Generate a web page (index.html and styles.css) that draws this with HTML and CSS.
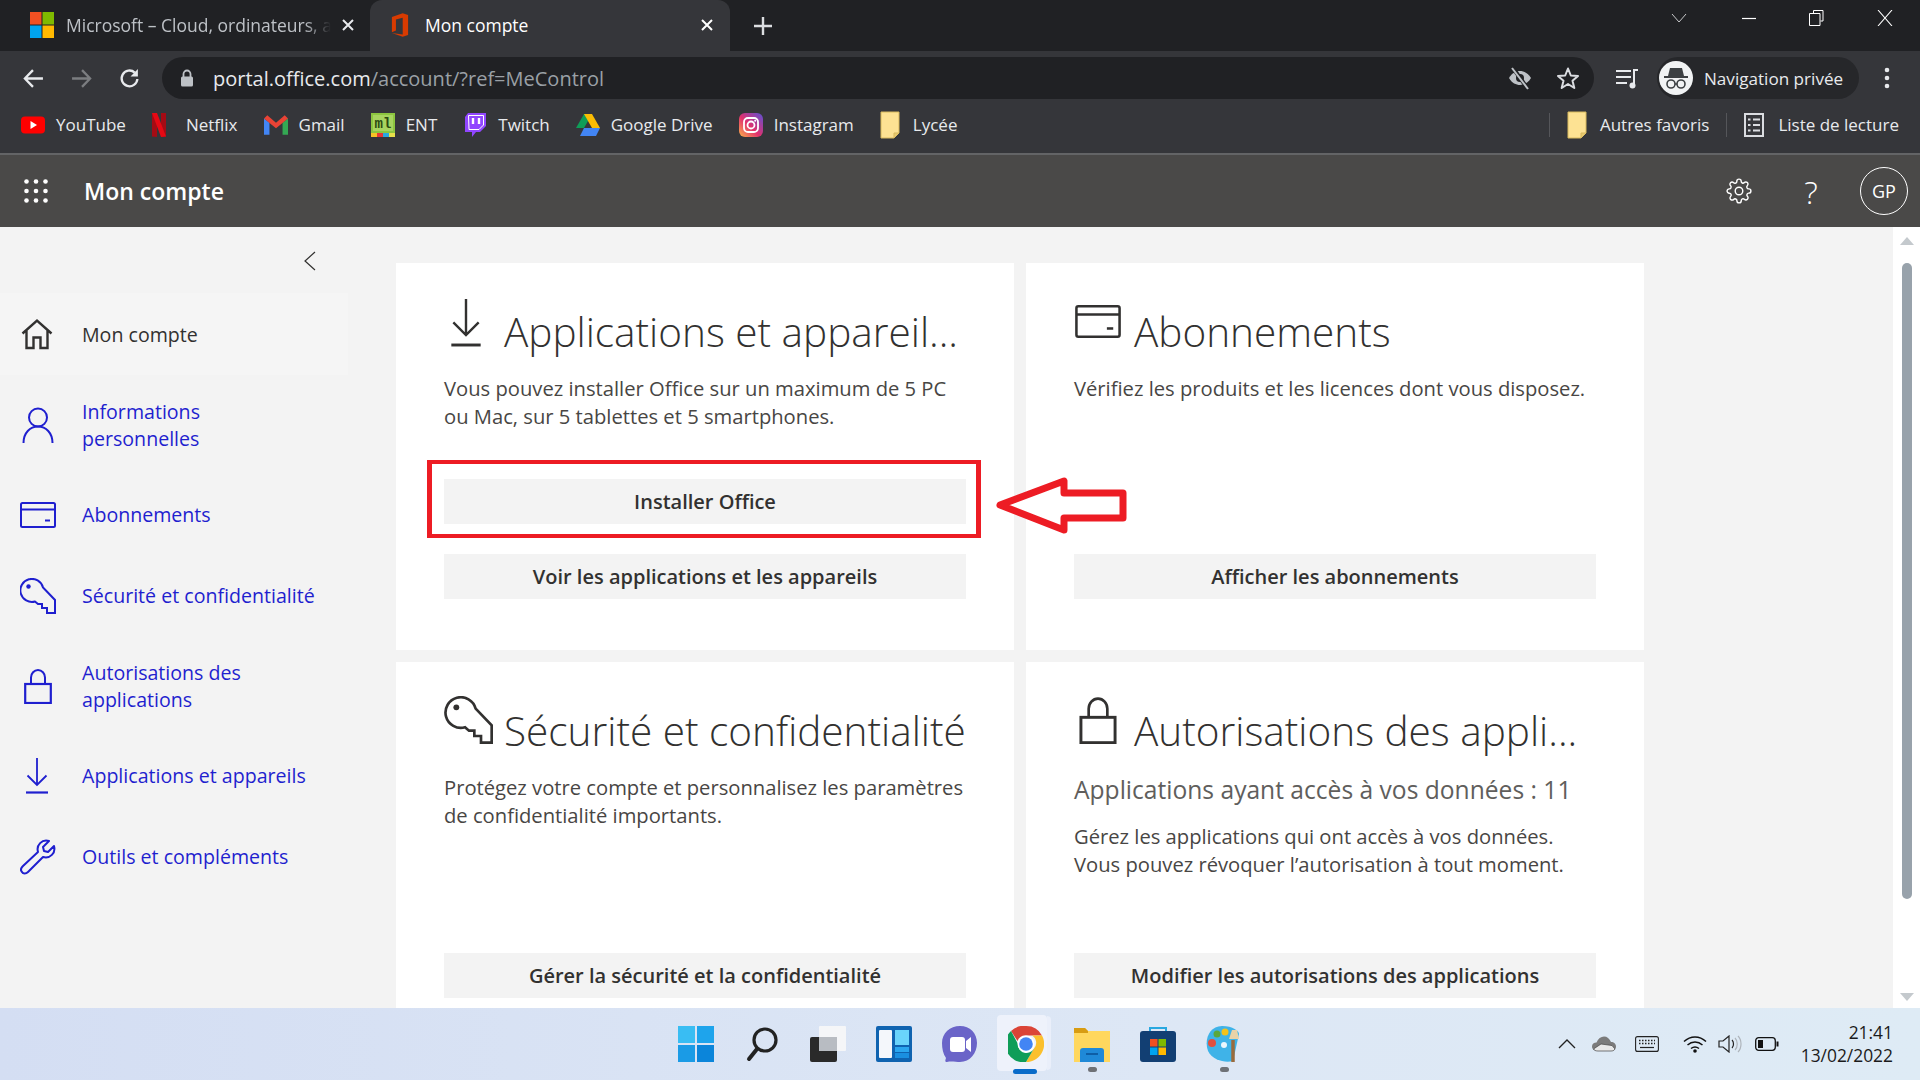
FILE: index.html
```html
<!DOCTYPE html>
<html lang="fr">
	<head>
		<meta charset="utf-8">
		<title>Mon compte</title>
		<link rel="stylesheet" href="styles.css">
	</head>
	<body>
		<svg class="defs" width="0" height="0">
			<symbol id="i-home" viewBox="0 0 32 32"><path d="M1.5 15.5 16 2.5l14.500 13M5.500 12.500V30H12.500V19.500H19.500V30H26.500V12.500" fill="none" stroke="currentColor" stroke-width="2.400"/></symbol>
			<symbol id="i-user" viewBox="0 0 32 36"><circle cx="16" cy="10.500" r="9" fill="none" stroke="currentColor" stroke-width="2"/><path d="M1.500 36C1.500 26 8 19.500 16 19.500S30.500 26 30.500 36" fill="none" stroke="currentColor" stroke-width="2"/></symbol>
			<symbol id="i-card" viewBox="0 0 36 26"><rect x="1" y="1" width="34" height="24" rx="1.500" fill="none" stroke="currentColor" stroke-width="2"/><path d="M1 7.500H35" stroke="currentColor" stroke-width="2"/><path d="M25 18.500H30" stroke="currentColor" stroke-width="2"/></symbol>
			<symbol id="i-key" viewBox="0 0 36 36"><path d="M15 23.500A11.500 11.500 0 1 1 23 9.500L35 22V35H27V30H22V26H18Z" fill="none" stroke="currentColor" stroke-width="2"/><circle cx="8.500" cy="8.500" r="2.200" fill="currentColor"/></symbol>
			<symbol id="i-lock" viewBox="0 0 28 36"><path d="M7 16V9.500a7 7.500 0 0 1 14 0V16" fill="none" stroke="currentColor" stroke-width="2"/><rect x="1.200" y="16" width="25.600" height="19" fill="none" stroke="currentColor" stroke-width="2.200"/></symbol>
			<symbol id="i-down" viewBox="0 0 22 36"><path d="M11 0V27M1.500 17.500 11 27l9.500-9.500" fill="none" stroke="currentColor" stroke-width="1.800"/><path d="M0 34.500H22" stroke="currentColor" stroke-width="2.200"/></symbol>
			<symbol id="i-tool" viewBox="0 0 36 36"><path d="M29 2 23 8 24 12 28 13 34 7C36 14 30 20 23 18L8 33C6 35 3 35 2 33 0 31 1 29 3 27L18 13C16 6 22 0 29 2Z" fill="none" stroke="currentColor" stroke-width="2" stroke-linejoin="round"/></symbol>
			<symbol id="i-x" viewBox="0 0 14 14"><path d="M2 2 12 12M12 2 2 12" fill="none" stroke="currentColor" stroke-width="2"/></symbol>
			<symbol id="i-folder" viewBox="0 0 20 28"><path d="M1 1H19V22L14 27H1Z" fill="#fde293" stroke="#d8b95c"/><path d="M14 27V22H19" fill="#e8c96e" stroke="#d8b95c"/></symbol>
		</svg>

		<div class="tabstrip">
			<div class="tab">
				<svg class="favicon" viewBox="0 0 24 26"><rect width="11.500" height="12.500" fill="#f25022"/><rect x="12.500" width="11.500" height="12.500" fill="#7fba00"/><rect y="13.500" width="11.500" height="12.500" fill="#00a4ef"/><rect x="12.500" y="13.500" width="11.500" height="12.500" fill="#ffb900"/></svg>
				<span class="tab-title tab-fade">Microsoft – Cloud, ordinateurs, applications</span>
				<svg class="tab-close"><use href="#i-x"/></svg>
			</div>
			<div class="tab tab-active">
				<svg class="favicon-office" viewBox="0 0 20 26"><path d="M1 4 13 0 19 2V24L13 26 1 22 13 23.500V5L5.500 7V19L1 21Z" fill="#d83b01"/></svg>
				<span class="tab-title">Mon compte</span>
				<svg class="tab-close"><use href="#i-x"/></svg>
			</div>
			<svg class="tab-new" viewBox="0 0 20 20"><path d="M10 1V19M1 10H19" stroke="#dcdee1" stroke-width="2.400"/></svg>
			<div class="win-controls">
				<svg viewBox="0 0 16 10" class="win-chevron"><path d="M1 1 8 9l7-8" fill="none" stroke="#c8c9cb" stroke-width="1"/></svg>
				<svg viewBox="0 0 16 16" class="win-btn"><path d="M1 8.500H15" stroke="#fff" stroke-width="1.200"/></svg>
				<svg viewBox="0 0 16 16" class="win-btn"><path d="M4.500 3V.5H14V11H11.500M.5 3.500H11V15.500H.5Z" fill="none" stroke="#fff" stroke-width="1"/></svg>
				<svg viewBox="0 0 16 16" class="win-btn"><path d="M1 0 15 16M15 0 1 16" stroke="#fff" stroke-width="1.100"/></svg>
			</div>
		</div>

		<div class="toolbar">
			<div class="nav-btn"><svg viewBox="0 0 20 20"><path d="M19 10H2M9.500 2 1.800 10l7.700 8" fill="none" stroke="#e8eaed" stroke-width="2.200"/></svg></div>
			<div class="nav-btn"><svg viewBox="0 0 20 20"><path d="M1 10H18M10.500 2 18.200 10l-7.700 8" fill="none" stroke="#7b7d80" stroke-width="2.200"/></svg></div>
			<div class="nav-btn"><svg viewBox="0 0 20 20"><path d="M17.500 10.500A7.500 7.500 0 1 1 15 4.300" fill="none" stroke="#e8eaed" stroke-width="2.200"/><path d="M18 1V8H11Z" fill="#e8eaed"/></svg></div>
			<div class="address">
				<svg class="lock" viewBox="0 0 14 18"><path d="M3.500 8V5a3.500 3.500 0 0 1 7 0V8" fill="none" stroke="#bdc1c6" stroke-width="1.800"/><rect x="1" y="7.500" width="12" height="10" rx="1.500" fill="#bdc1c6"/></svg>
				<span class="url"><span class="url-host">portal.office.com</span>/account/?ref=MeControl</span>
				<svg class="addr-icon" viewBox="0 0 24 24"><path d="M1 12C4 7 8 5 12 5s8 2 11 7c-3 5-7 7-11 7S4 17 1 12Z" fill="#bdc1c6"/><circle cx="12" cy="12" r="4" fill="#202124"/><path d="M5 2 20 23" stroke="#202124" stroke-width="4"/><path d="M4 2 20 23" stroke="#bdc1c6" stroke-width="2"/></svg>
				<svg class="addr-icon addr-star" viewBox="0 0 24 24"><path d="M12 2.500 14.800 9.500 22 10 16.500 14.800 18.300 22 12 18 5.700 22 7.500 14.800 2 10 9.200 9.500Z" fill="none" stroke="#dadce0" stroke-width="2" stroke-linejoin="round"/></svg>
			</div>
			<svg class="media" viewBox="0 0 24 24"><path d="M1 5H16M1 11H16M1 17H12" stroke="#e8eaed" stroke-width="2.200"/><path d="M19 19V4H23" fill="none" stroke="#e8eaed" stroke-width="2"/><circle cx="17.500" cy="19.500" r="3" fill="#e8eaed"/></svg>
			<div class="incognito">
				<span class="incognito-face"><svg viewBox="0 0 26 26"><path d="M7 3H19L21 11H25V13H1V11H5Z" fill="#3c4043"/><circle cx="8" cy="19" r="4" fill="none" stroke="#3c4043" stroke-width="1.600"/><circle cx="18" cy="19" r="4" fill="none" stroke="#3c4043" stroke-width="1.600"/><path d="M12 19H14" stroke="#3c4043" stroke-width="1.600"/></svg></span>
				<span>Navigation privée</span>
			</div>
			<svg class="kebab" viewBox="0 0 6 24"><circle cx="3" cy="4" r="2.300" fill="#e8eaed"/><circle cx="3" cy="12" r="2.300" fill="#e8eaed"/><circle cx="3" cy="20" r="2.300" fill="#e8eaed"/></svg>
		</div>

		<div class="bookmarks">
			<div class="bm bm-yt">
				<svg class="bm-icon" viewBox="0 0 24 18"><rect width="24" height="17" y=".5" rx="4" fill="#f00"/><path d="M9.500 5 16 9l-6.500 4Z" fill="#fff"/></svg>
				<span>YouTube</span>
			</div>
			<div class="bm bm-nf">
				<svg class="bm-icon nf" viewBox="0 0 14 24"><path d="M0 0H5V24L0 23.500ZM9 0H14V23.500L9 24Z" fill="#a50b14"/><path d="M0 0H5L14 23.500 9 24Z" fill="#e50914"/></svg>
				<span>Netflix</span>
			</div>
			<div class="bm bm-gm">
				<svg class="bm-icon" viewBox="0 0 22 18"><path d="M0 3V18H5V7Z" fill="#4285f4"/><path d="M22 3V18H17V7Z" fill="#34a853"/><path d="M0 3 3 0 11 7 19 0 22 3 11 12Z" fill="#ea4335"/></svg>
				<span>Gmail</span>
			</div>
			<div class="bm bm-ent">
				<svg class="bm-icon" viewBox="0 0 24 24"><rect width="24" height="24" fill="#8cc63f"/><rect y="20" width="6" height="4" fill="#f7c325"/><rect x="6" y="20" width="6" height="4" fill="#e53935"/><rect x="12" y="20" width="6" height="4" fill="#29a8e0"/><rect x="18" y="20" width="6" height="4" fill="#e6e04a"/><rect x="2" y="2" width="20" height="16" fill="#a7d45f"/><text class="ent-text" x="12" y="15" text-anchor="middle">ml</text></svg>
				<span>ENT</span>
			</div>
			<div class="bm bm-tw">
				<svg class="bm-icon" viewBox="0 0 22 24"><path d="M4 0H22V13L16 19H12L8 24V19H1V4Z" fill="#9146ff"/><path d="M9 5V11M15 5V11" stroke="#fff" stroke-width="2.400"/><path d="M4.500 2.500H19.500V12L15 16.500H5Z" fill="none" stroke="#fff" stroke-width="1"/></svg>
				<span>Twitch</span>
			</div>
			<div class="bm bm-gd">
				<svg class="bm-icon" viewBox="0 0 24 22"><path d="M8 0H16L8 14H0Z" fill="#0f9d58"/><path d="M8 0H16L24 14H16Z" fill="#fbbc04"/><path d="M8 14H24L20 22H4Z" fill="#4285f4"/></svg>
				<span>Google Drive</span>
			</div>
			<div class="bm bm-ig">
				<svg class="bm-icon" viewBox="0 0 24 24"><defs><linearGradient id="ig" x1="0" y1="1" x2="1" y2="0"><stop offset="0" stop-color="#fdb44a"/><stop offset=".45" stop-color="#e1306c"/><stop offset="1" stop-color="#5b51d8"/></linearGradient></defs><rect width="24" height="24" rx="6" fill="url(#ig)"/><rect x="5" y="5" width="14" height="14" rx="4" fill="none" stroke="#fff" stroke-width="1.800"/><circle cx="12" cy="12" r="3.500" fill="none" stroke="#fff" stroke-width="1.800"/><circle cx="16.200" cy="7.800" r="1" fill="#fff"/></svg>
				<span>Instagram</span>
			</div>
			<div class="bm">
				<svg class="bm-icon folder"><use href="#i-folder"/></svg>
				<span>Lycée</span>
			</div>
			<div class="bm-right">
				<div class="bm bm-sep">
					<svg class="bm-icon folder"><use href="#i-folder"/></svg>
					<span>Autres favoris</span>
				</div>
				<div class="bm bm-sep">
					<svg class="bm-icon list" viewBox="0 0 20 24"><rect x="1" y="1" width="18" height="22" fill="none" stroke="#dadce0" stroke-width="2"/><path d="M4 6.500H6.500M9 6.500H16M4 12H6.500M9 12H16M4 17.500H6.500M9 17.500H16" stroke="#dadce0" stroke-width="2"/></svg>
					<span>Liste de lecture</span>
				</div>
			</div>
		</div>

		<div class="suite-header">
			<svg class="waffle" viewBox="0 0 24 24"><g fill="#fff"><circle cx="2.500" cy="2.500" r="2.300"/><circle cx="12" cy="2.500" r="2.300"/><circle cx="21.500" cy="2.500" r="2.300"/><circle cx="2.500" cy="12" r="2.300"/><circle cx="12" cy="12" r="2.300"/><circle cx="21.500" cy="12" r="2.300"/><circle cx="2.500" cy="21.500" r="2.300"/><circle cx="12" cy="21.500" r="2.300"/><circle cx="21.500" cy="21.500" r="2.300"/></g></svg>
			<span class="suite-title">Mon compte</span>
			<svg class="gear" viewBox="0 0 24 24"><circle cx="12" cy="12" r="3.500" fill="none" stroke="#fff" stroke-width="1.300"/><path d="M19.400 15a1.650 1.650 0 0 0 .33 1.820l.06.06a2 2 0 0 1 0 2.830 2 2 0 0 1-2.830 0l-.06-.06a1.650 1.650 0 0 0-1.820-.33 1.650 1.650 0 0 0-1 1.510V21a2 2 0 0 1-2 2 2 2 0 0 1-2-2v-.09A1.650 1.650 0 0 0 9 19.400a1.650 1.650 0 0 0-1.820.33l-.06.06a2 2 0 0 1-2.830 0 2 2 0 0 1 0-2.830l.06-.06a1.650 1.650 0 0 0 .33-1.820 1.650 1.650 0 0 0-1.510-1H3a2 2 0 0 1-2-2 2 2 0 0 1 2-2h.09A1.650 1.650 0 0 0 4.600 9a1.650 1.650 0 0 0-.33-1.820l-.06-.06a2 2 0 0 1 0-2.830 2 2 0 0 1 2.830 0l.06.06a1.650 1.650 0 0 0 1.820.33H9a1.650 1.650 0 0 0 1-1.510V3a2 2 0 0 1 2-2 2 2 0 0 1 2 2v.09a1.650 1.650 0 0 0 1 1.510 1.650 1.650 0 0 0 1.820-.33l.06-.06a2 2 0 0 1 2.830 0 2 2 0 0 1 0 2.830l-.06.06a1.650 1.650 0 0 0-.33 1.820V9a1.650 1.650 0 0 0 1.510 1H21a2 2 0 0 1 2 2 2 2 0 0 1-2 2h-.09a1.650 1.650 0 0 0-1.510 1z" fill="none" stroke="#fff" stroke-width="1.300"/></svg>
			<span class="help">?</span>
			<span class="me">GP</span>
		</div>

		<div class="main">
			<nav class="sidebar">
				<div class="collapse"><svg viewBox="0 0 12 20"><path d="M11 1 1 10l10 9" fill="none" stroke="#323130" stroke-width="1.200"/></svg></div>
				<a class="nav-item nav-current"><svg class="nav-icon home"><use href="#i-home"/></svg><span>Mon compte</span></a>
				<a class="nav-item nav-tall"><svg class="nav-icon user"><use href="#i-user"/></svg><span>Informations<br>personnelles</span></a>
				<a class="nav-item"><svg class="nav-icon card"><use href="#i-card"/></svg><span>Abonnements</span></a>
				<a class="nav-item"><svg class="nav-icon key"><use href="#i-key"/></svg><span>Sécurité et confidentialité</span></a>
				<a class="nav-item nav-tall"><svg class="nav-icon lockic"><use href="#i-lock"/></svg><span>Autorisations des<br>applications</span></a>
				<a class="nav-item"><svg class="nav-icon down"><use href="#i-down"/></svg><span>Applications et appareils</span></a>
				<a class="nav-item"><svg class="nav-icon tool"><use href="#i-tool"/></svg><span>Outils et compléments</span></a>
			</nav>

			<div class="cards">
				<section class="panel panel-marked">
					<div class="panel-head"><span class="head-icon"><svg class="hi-down"><use href="#i-down"/></svg></span><h2>Applications et appareil...</h2></div>
					<p>Vous pouvez installer Office sur un maximum de 5 PC<br>ou Mac, sur 5 tablettes et 5 smartphones.</p>
					<a class="action action-install">Installer Office</a>
					<a class="action action-second">Voir les applications et les appareils</a>
					<div class="red-box"></div>
					<svg class="red-arrow" viewBox="0 0 136 62"><path d="M6 29 70 5V17H129V42H70V54Z" fill="#fff" stroke="#ed1c24" stroke-width="7" stroke-linejoin="round"/></svg>
				</section>
				<section class="panel">
					<div class="panel-head"><span class="head-icon"><svg class="hi-card"><use href="#i-card"/></svg></span><h2>Abonnements</h2></div>
					<p>Vérifiez les produits et les licences dont vous disposez.</p>
					<a class="action">Afficher les abonnements</a>
				</section>
				<section class="panel">
					<div class="panel-head"><span class="head-icon"><svg class="hi-key"><use href="#i-key"/></svg></span><h2>Sécurité et confidentialité</h2></div>
					<p>Protégez votre compte et personnalisez les paramètres<br>de confidentialité importants.</p>
					<a class="action">Gérer la sécurité et la confidentialité</a>
				</section>
				<section class="panel">
					<div class="panel-head"><span class="head-icon"><svg class="hi-lock"><use href="#i-lock"/></svg></span><h2>Autorisations des appli...</h2></div>
					<h3>Applications ayant accès à vos données : 11</h3>
					<p>Gérez les applications qui ont accès à vos données.<br>Vous pouvez révoquer l’autorisation à tout moment.</p>
					<a class="action">Modifier les autorisations des applications</a>
				</section>
			</div>

			<div class="scrollbar">
				<svg class="sb-arrow" viewBox="0 0 14 8"><path d="M7 0 14 8H0Z" fill="#c4c9cd"/></svg>
				<div class="sb-thumb"></div>
				<svg class="sb-arrow" viewBox="0 0 14 8"><path d="M0 0H14L7 8Z" fill="#c4c9cd"/></svg>
			</div>
		</div>

		<div class="taskbar">
			<div class="task-side"></div>
			<div class="task-apps">
				<div class="app"><svg viewBox="0 0 36 36"><rect width="17" height="17" fill="#39bdf3"/><rect x="19" width="17" height="17" fill="#1ea4ec"/><rect y="19" width="17" height="17" fill="#1a9be6"/><rect x="19" y="19" width="17" height="17" fill="#0b85da"/></svg></div>
				<div class="app"><svg viewBox="0 0 36 36"><circle cx="21" cy="14" r="11" fill="none" stroke="#222" stroke-width="3.200"/><path d="M13 23 5 33" stroke="#222" stroke-width="4" stroke-linecap="round"/></svg></div>
				<div class="app"><svg viewBox="0 0 36 36"><rect y="11" width="27" height="25" rx="2" fill="#2a2a2a"/><rect x="9" y="0" width="27" height="25" rx="1" fill="#f5f6f8"/><rect x="9" y="11" width="18" height="14" fill="#b8bcc2"/></svg></div>
				<div class="app"><svg viewBox="0 0 36 36"><rect width="36" height="36" rx="2" fill="#0f63b0"/><rect x="3" y="4" width="13" height="28" rx="1" fill="#f4f7fb"/><rect x="19" y="4" width="14" height="15" fill="#6ad4fb"/><rect x="19" y="21" width="14" height="5" fill="#2aa6ef"/><rect x="19" y="27" width="14" height="5" fill="#1a8fe0"/></svg></div>
				<div class="app"><svg viewBox="0 0 36 36"><path d="M18 0C28 0 35 7 35 17S28 36 18 36C14 36 9 35 5 36 3 36 3 35 4 32 1 28 0 22 0 17 0 7 8 0 18 0Z" fill="#6a64c8"/><rect x="8" y="11" width="15" height="15" rx="3" fill="#fff"/><path d="M24 15 29 11V26L24 22Z" fill="#fff"/></svg></div>
				<div class="app app-active"><span class="chrome-stack"></span><svg viewBox="0 0 36 36"><path d="M18 0A18 18 0 0 1 34 9.500H18A8.500 8.500 0 0 0 9.500 15L3 5A18 18 0 0 1 18 0Z" fill="#db4437"/><path d="M34 9.500A18 18 0 0 1 18 36L26 22.500A8.500 8.500 0 0 0 24 9.500Z" fill="#fbc02d"/><path d="M3 5 10 18A8.500 8.500 0 0 0 26 22.500L18 36A18 18 0 0 1 3 5Z" fill="#0f9d58"/><circle cx="18" cy="18" r="8.500" fill="#fff"/><circle cx="18" cy="18" r="6.800" fill="#4285f4"/></svg><span class="dot dot-blue"></span></div>
				<div class="app"><svg viewBox="0 0 36 36"><path d="M0 2H11L14 5H36V36H0Z" fill="#ffd75e"/><path d="M0 2H11L14 5V7H0Z" fill="#d89c12"/><path d="M6 36V25C6 23 7 22 9 22H27C29 22 30 23 30 25V36Z" fill="#1f89d8"/><path d="M12 28H24" stroke="#0e5ea6" stroke-width="2"/></svg><span class="dot"></span></div>
				<div class="app"><svg viewBox="0 0 36 36"><path d="M10 6V2H26V6" fill="none" stroke="#29a8e0" stroke-width="2"/><rect y="5" width="36" height="31" rx="3" fill="#123f73"/><rect x="10" y="13" width="7.500" height="7.500" fill="#f25022"/><rect x="18.500" y="13" width="7.500" height="7.500" fill="#7fba00"/><rect x="10" y="21.500" width="7.500" height="7.500" fill="#00a4ef"/><rect x="18.500" y="21.500" width="7.500" height="7.500" fill="#ffb900"/></svg></div>
				<div class="app"><svg viewBox="0 0 36 36"><path d="M16 0C27 0 33 5 33 8L27 35C20 37 7 35 2 25-2 14 3 0 16 0Z" fill="#3fb3e8"/><circle cx="6" cy="17" r="4" fill="#e0503f"/><circle cx="11" cy="8" r="3.500" fill="#5aa83c"/><circle cx="19" cy="6" r="3.500" fill="#f4c21c"/><circle cx="18" cy="19" r="3" fill="#eaf6fd"/><path d="M27 14V36" stroke="#9a6b3c" stroke-width="3.500"/><path d="M23 13 26 4H31L33 13Z" fill="#e9d3a8"/></svg><span class="dot"></span></div>
			</div>
			<div class="task-side task-tray">
				<svg class="tray-chevron" viewBox="0 0 18 10"><path d="M1 9 9 1l8 8" fill="none" stroke="#222" stroke-width="1.300"/></svg>
				<svg class="tray-cloud" viewBox="0 0 24 16"><path d="M6 15C2 15 0 13 0 10.500S2 6.500 4.500 6.500C6 2.500 9 .5 12 .5S17.500 2.500 19 6C22 6 24 8 24 10.500S22 15 19 15Z" fill="#7b7b7b"/><path d="M1.500 13 9 8 20 9.500 23 13C22 14.500 21 15 19 15H6C4 15 2.500 14.500 1.500 13Z" fill="#e8e8e8" stroke="#444" stroke-width=".7"/></svg>
				<svg class="tray-keys" viewBox="0 0 24 16"><rect x=".6" y=".6" width="22.800" height="14.800" rx="2" fill="none" stroke="#222" stroke-width="1.100"/><path d="M4 4.500H20M4 7.500H20" stroke="#222" stroke-width="1.300" stroke-dasharray="1.500 1.500"/><path d="M5 11.500H19" stroke="#222" stroke-width="1.200"/></svg>
				<svg class="tray-wifi" viewBox="0 0 24 18"><path d="M1 6.500C7.500 .5 16.500 .5 23 6.500M4.500 10C9 6 15 6 19.500 10M8 13.500C10.500 11.500 13.500 11.500 16 13.500" fill="none" stroke="#111" stroke-width="1.500"/><circle cx="12" cy="16" r="1.800" fill="#111"/></svg>
				<svg class="tray-sound" viewBox="0 0 24 18"><path d="M1 6H5L11 1V17L5 12H1Z" fill="none" stroke="#222" stroke-width="1.200"/><path d="M14 5C16 7 16 11 14 13" fill="none" stroke="#222" stroke-width="1.200"/><path d="M17 3C20 6 20 12 17 15M20 1C24 5 24 13 20 17" fill="none" stroke="#aeb4bb" stroke-width="1.200"/></svg>
				<svg class="tray-battery" viewBox="0 0 24 14"><rect x=".7" y=".7" width="19.600" height="12.600" rx="3" fill="none" stroke="#111" stroke-width="1.300"/><rect x="3" y="3" width="5" height="8" fill="#111"/><path d="M21.500 4.500H23.500V9.500H21.500Z" fill="#111"/></svg>
				<div class="clock">21:41<br>13/02/2022</div>
			</div>
		</div>
	</body>
</html>
```

FILE: styles.css
```css
* {
	box-sizing: border-box;
}

html, body {
	height: 100%;
}

body {
	margin: 0;
	display: flex;
	flex-direction: column;
	overflow: hidden;
	font-family: "Open Sans", "Noto Sans", sans-serif;
	background-color: #f3f3f3;
	color: #323130;
}

svg {
	display: block;
	flex: none;
}

.defs {
	position: absolute;
}

/* browser chrome */
.tabstrip {
	height: 51px;
	display: flex;
	align-items: flex-end;
	padding-left: 13px;
	background-color: #202124;
	color: #e8eaed;
	font-size: 17.5px;
}

.tab {
	width: 344px;
	height: 51px;
	display: flex;
	align-items: center;
	padding: 0 2px 2px 17px;
	margin-right: 13px;
}

.tab-active {
	width: 360px;
	margin-right: 0;
	padding: 0 16px 2px 21px;
	background-color: #35363a;
	border-radius: 12px 12px 0 0;
	color: #fff;
}

.favicon {
	width: 24px;
	height: 26px;
}

.favicon-office {
	width: 18px;
	height: 24px;
}

.tab-title {
	flex: 1;
	margin-left: 12px;
	white-space: nowrap;
	overflow: hidden;
}

.tab-active .tab-title {
	margin-left: 16px;
}

.tab-fade {
	color: #bdc1c6;
	mask-image: linear-gradient(to right, #000 90%, transparent);
}

.tab-close {
	width: 14px;
	height: 14px;
	margin-left: 10px;
}

.tab-new {
	width: 20px;
	height: 20px;
	margin: 0 0 15px 23px;
}

.win-controls {
	margin-left: auto;
	height: 51px;
	display: flex;
	align-items: center;
	padding: 0 27px 30px 0;
}

.win-chevron {
	width: 16px;
	height: 10px;
	margin: 14px 54px 0 0;
}

.win-btn {
	width: 16px;
	height: 16px;
	margin: 14px 0 0 0;
}

.win-btn + .win-btn {
	margin-left: 52px;
}

.toolbar {
	height: 52px;
	display: flex;
	align-items: center;
	padding: 2px 0 0 9px;
	background-color: #35363a;
}

.nav-btn {
	width: 48px;
	display: flex;
	justify-content: center;
}

.nav-btn svg {
	width: 21px;
	height: 21px;
}

.address {
	width: 1432px;
	height: 42px;
	margin-left: 9px;
	padding: 0 14px 0 18px;
	display: flex;
	align-items: center;
	background-color: #202124;
	border-radius: 21px;
	color: #9aa0a6;
	font-size: 20px;
}

.lock {
	width: 14px;
	height: 18px;
}

.url {
	flex: 1;
	margin-left: 19px;
}

.url-host {
	color: #e8eaed;
}

.addr-icon {
	width: 24px;
	height: 24px;
}

.addr-star {
	margin-left: 24px;
}

.media {
	width: 24px;
	height: 24px;
	margin-left: 21px;
}

.incognito {
	width: 202px;
	height: 42px;
	margin-left: 18px;
	padding-left: 2px;
	display: flex;
	align-items: center;
	gap: 11px;
	background-color: #26272a;
	border-radius: 21px;
	color: #e8eaed;
	font-size: 17.100px;
	white-space: nowrap;
}

.incognito-face {
	width: 34px;
	height: 34px;
	padding: 4px;
	background-color: #f1f3f4;
	border-radius: 50%;
}

.incognito-face svg {
	width: 26px;
	height: 26px;
}

.kebab {
	width: 6px;
	height: 24px;
	margin-left: 25px;
}

.bookmarks {
	height: 52px;
	padding: 0 21px 7px 21px;
	display: flex;
	align-items: center;
	background-color: #35363a;
	border-bottom: 2px solid #636466;
	color: #e8eaed;
	font-size: 17px;
}

.bm {
	display: flex;
	align-items: center;
	gap: 11px;
	margin-right: 26px;
	white-space: nowrap;
}

.bm-icon {
	width: 24px;
	height: 24px;
}

.nf {
	width: 14px;
	margin-right: 9px;
}

.folder {
	width: 20px;
	height: 28px;
	margin-right: 2px;
}

.list {
	width: 20px;
	height: 24px;
	margin-right: 3px;
}

.ent-text {
	font-family: "Liberation Mono", monospace;
	font-size: 14px;
	font-weight: 700;
	fill: #2c4a10;
}

.bm-right {
	margin-left: auto;
	display: flex;
}

.bm-sep {
	margin: 0 0 0 17px;
	padding-left: 17px;
	height: 24px;
	border-left: 1px solid #55565a;
}

.suite-header {
	height: 72px;
	padding-right: 12px;
	display: flex;
	align-items: center;
	background-color: #4a4948;
	color: #fff;
}

.waffle {
	width: 24px;
	height: 24px;
	margin-left: 24px;
}

.suite-title {
	margin-left: 36px;
	flex: 1;
	font-size: 23px;
	font-weight: 600;
}

.gear {
	width: 26px;
	height: 26px;
}

.help {
	width: 30px;
	margin: 0 34px 0 44px;
	text-align: center;
	font-size: 32px;
	font-weight: 300;
}

.me {
	width: 48px;
	height: 48px;
	line-height: 46px;
	text-align: center;
	border: 1px solid #fff;
	border-radius: 50%;
	font-size: 18px;
}

/* page */
.main {
	height: 781px;
	display: flex;
	overflow: hidden;
}

.sidebar {
	width: 348px;
	flex: none;
}

.collapse {
	height: 66px;
	padding: 24px 0 0 304px;
}

.collapse svg {
	width: 12px;
	height: 20px;
}

.nav-item {
	height: 81px;
	display: flex;
	align-items: center;
	color: #1f1fcf;
	font-size: 19.600px;
	line-height: 27px;
}

.nav-tall {
	height: 99px;
}

.nav-current {
	height: 82px;
	background-color: #f5f5f5;
	color: #323130;
}

.nav-item span {
	margin-left: 18px;
}

.nav-icon {
	width: 36px;
	height: 36px;
	margin-left: 20px;
	margin-right: 8px;
}

.home {
	width: 32px;
	height: 32px;
	margin-left: 21px;
	margin-right: 11px;
}

.user {
	width: 32px;
	margin-left: 22px;
	margin-right: 10px;
}

.card {
	height: 26px;
}

.lockic {
	width: 28px;
	margin-left: 24px;
	margin-right: 12px;
}

.down {
	width: 22px;
	margin-left: 26px;
	margin-right: 16px;
}

.cards {
	flex: 1;
	display: grid;
	grid-template-columns: 618px 618px;
	grid-auto-rows: 387px;
	gap: 12px;
	padding: 36px 0 0 48px;
}

.panel {
	position: relative;
	padding: 34px 48px 51px;
	display: flex;
	flex-direction: column;
	background-color: #fff;
}

.panel-head {
	height: 60px;
	display: flex;
	align-items: center;
}

.head-icon {
	width: 60px;
	height: 60px;
	flex: none;
}

.hi-down {
	width: 30px;
	height: 48px;
	margin: 2px 0 0 7px;
}

.hi-card {
	width: 48px;
	height: 33px;
	margin: 8px 0 0 0;
}

.hi-key {
	width: 50px;
	height: 48px;
	margin: 0;
}

.hi-lock {
	width: 38px;
	height: 48px;
	margin: 0 0 0 5px;
}

h2 {
	margin: 8px 0 0;
	font-size: 40.500px;
	font-weight: 300;
	white-space: nowrap;
}

h3 {
	margin: 18px 0 0;
	font-size: 24.600px;
	line-height: 32px;
	font-weight: 400;
	color: #605e5c;
}

p {
	margin: 17px 0 0;
	font-size: 20.200px;
	line-height: 28px;
	font-weight: 400;
	color: #484644;
}

h3 + p {
	margin-top: 16px;
}

.action {
	height: 45px;
	margin-top: auto;
	flex: none;
	display: flex;
	align-items: center;
	justify-content: center;
	background-color: #f3f3f3;
	font-size: 20px;
	font-weight: 600;
}

.action-second {
	margin-top: 30px;
}

.red-box {
	position: absolute;
	left: 31px;
	top: 197px;
	width: 554px;
	height: 78px;
	border: solid #ed1c24;
	border-width: 4px 5px;
}

.red-arrow {
	position: absolute;
	left: 598px;
	top: 213px;
	width: 136px;
	height: 62px;
	z-index: 2;
}

.scrollbar {
	width: 27px;
	flex: none;
	height: 781px;
	padding-top: 10px;
	display: flex;
	flex-direction: column;
	align-items: center;
	background-color: #fff;
}

.sb-arrow {
	width: 14px;
	height: 8px;
}

.sb-thumb {
	width: 10px;
	height: 636px;
	margin: 18px 0 94px;
	background-color: #98a2ab;
	border-radius: 5px;
}

/* windows taskbar */
.taskbar {
	height: 72px;
	display: flex;
	align-items: center;
	background: linear-gradient(to right, #d4def3, #dde7f5 60%, #deebf5);
	color: #1b1b1b;
}

.task-side {
	flex: 1;
	min-width: 0;
}

.task-apps {
	display: flex;
	gap: 30px;
}

.app {
	position: relative;
	width: 36px;
	height: 36px;
}

.app svg {
	position: relative;
	width: 36px;
	height: 36px;
}

.app-active::before {
	content: "";
	position: absolute;
	left: -11px;
	top: -11px;
	width: 50px;
	height: 56px;
	background-color: #eef2fb;
	border-radius: 4px;
}

.chrome-stack {
	position: absolute;
	left: 39px;
	top: -10px;
	width: 4px;
	height: 54px;
	background-color: #eaeffa;
	border-radius: 0 4px 4px 0;
}

.dot {
	position: absolute;
	left: 14px;
	bottom: -10px;
	width: 9px;
	height: 5px;
	background-color: #6e7176;
	border-radius: 3px;
}

.dot-blue {
	left: 5px;
	width: 24px;
	bottom: -12px;
	background-color: #0a6cc9;
}

.task-tray {
	display: flex;
	align-items: center;
	justify-content: flex-end;
}

.tray-chevron {
	width: 18px;
	height: 10px;
	margin-right: 16px;
}

.tray-cloud {
	width: 24px;
	height: 16px;
	margin-right: 19px;
}

.tray-keys {
	width: 24px;
	height: 16px;
	margin-right: 24px;
}

.tray-wifi {
	width: 24px;
	height: 18px;
	margin-right: 11px;
}

.tray-sound {
	width: 24px;
	height: 18px;
	margin-right: 13px;
}

.tray-battery {
	width: 24px;
	height: 14px;
	margin-right: 22px;
}

.clock {
	margin-right: 27px;
	text-align: right;
	font-size: 17.400px;
	line-height: 23px;
}
```
